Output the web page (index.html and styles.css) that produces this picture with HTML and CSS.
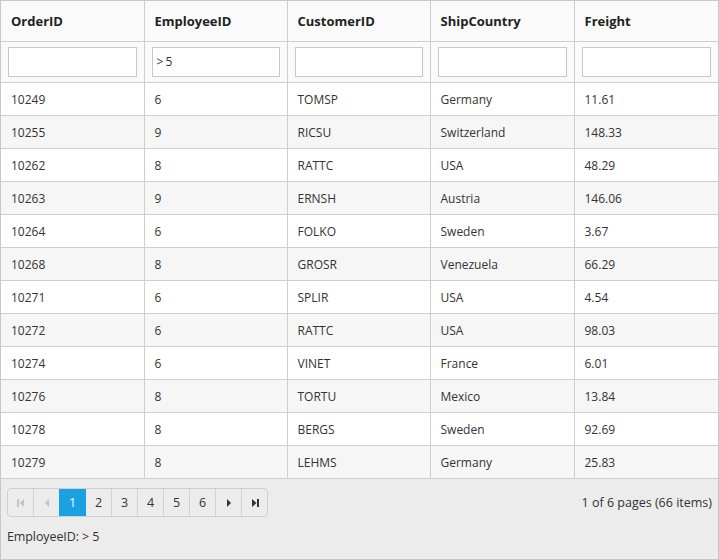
FILE: index.html
```html
<!DOCTYPE html>
<html>
<head>
<meta charset="utf-8">
<link rel="stylesheet" href="styles.css">
</head>
<body>
<div class="grid">
  <table class="table">
    <colgroup><col class="c1"><col class="c2"><col class="c3"><col class="c4"><col class="c5"></colgroup>
    <thead>
      <tr class="head"><th>OrderID</th><th>EmployeeID</th><th>CustomerID</th><th>ShipCountry</th><th>Freight</th></tr>
      <tr class="filter">
        <td><div class="inp"></div></td>
        <td><div class="inp">&gt; 5</div></td>
        <td><div class="inp"></div></td>
        <td><div class="inp"></div></td>
        <td><div class="inp"></div></td>
      </tr>
    </thead>
    <tbody>
      <tr><td>10249</td><td>6</td><td>TOMSP</td><td>Germany</td><td>11.61</td></tr>
      <tr class="alt"><td>10255</td><td>9</td><td>RICSU</td><td>Switzerland</td><td>148.33</td></tr>
      <tr><td>10262</td><td>8</td><td>RATTC</td><td>USA</td><td>48.29</td></tr>
      <tr class="alt"><td>10263</td><td>9</td><td>ERNSH</td><td>Austria</td><td>146.06</td></tr>
      <tr><td>10264</td><td>6</td><td>FOLKO</td><td>Sweden</td><td>3.67</td></tr>
      <tr class="alt"><td>10268</td><td>8</td><td>GROSR</td><td>Venezuela</td><td>66.29</td></tr>
      <tr><td>10271</td><td>6</td><td>SPLIR</td><td>USA</td><td>4.54</td></tr>
      <tr class="alt"><td>10272</td><td>6</td><td>RATTC</td><td>USA</td><td>98.03</td></tr>
      <tr><td>10274</td><td>6</td><td>VINET</td><td>France</td><td>6.01</td></tr>
      <tr class="alt"><td>10276</td><td>8</td><td>TORTU</td><td>Mexico</td><td>13.84</td></tr>
      <tr><td>10278</td><td>8</td><td>BERGS</td><td>Sweden</td><td>92.69</td></tr>
      <tr class="alt"><td>10279</td><td>8</td><td>LEHMS</td><td>Germany</td><td>25.83</td></tr>
    </tbody>
  </table>
  <div class="pager">
    <div class="pager-row">
      <div class="pages">
        <span class="pb dis"><svg width="8" height="8" viewBox="0 0 8 8"><rect x="0" y="0" width="2" height="8"/><path d="M7 0 L2.5 4 L7 8 Z"/></svg></span>
        <span class="pb dis"><svg width="8" height="8" viewBox="0 0 8 8"><path d="M6 0 L2 4 L6 8 Z"/></svg></span>
        <span class="pb active">1</span>
        <span class="pb">2</span>
        <span class="pb">3</span>
        <span class="pb">4</span>
        <span class="pb">5</span>
        <span class="pb">6</span>
        <span class="pb nav"><svg width="8" height="8" viewBox="0 0 8 8"><path d="M2 0 L6 4 L2 8 Z"/></svg></span>
        <span class="pb nav"><svg width="8" height="8" viewBox="0 0 8 8"><path d="M1 0 L5.5 4 L1 8 Z"/><rect x="6" y="0" width="2" height="8"/></svg></span>
      </div>
      <div class="info">1 of 6 pages (66 items)</div>
    </div>
    <div class="status">EmployeeID: &gt; 5</div>
  </div>
</div>
</body>
</html>
```

FILE: styles.css
```css
html, body {
  margin: 0;
  padding: 0;
  background: #fff;
}
body {
  font-family: "Open Sans", "Noto Sans", sans-serif;
  font-size: 12px;
  color: #333;
}
.grid {
  width: 717px;
  height: 558px;
  border: 1px solid #c8c8c8;
  display: flex;
  flex-direction: column;
}
.table {
  border-collapse: collapse;
  table-layout: fixed;
  width: 717px;
}
.c1 { width: 143px; }
.c2 { width: 143px; }
.c3 { width: 143px; }
.c4 { width: 144px; }
.c5 { width: 144px; }
th, td {
  border-left: 1px solid #cecece;
  border-bottom: 1px solid #cecece;
  padding: 0 10px;
  text-align: left;
  white-space: nowrap;
}
th:first-child, td:first-child { border-left: none; }
.head th {
  height: 40px;
  background: #fafafa;
  font-weight: bold;
  font-size: 13px;
  color: #222;
}
.filter td {
  height: 40px;
  background: #fafafa;
  padding: 0 7px;
}
.inp {
  border: 1px solid #c8c8c8;
  background: #fff;
  box-sizing: border-box;
  height: 30px;
  line-height: 28px;
  padding-left: 4px;
  font-size: 12px;
  color: #333;
  letter-spacing: -0.5px;
}
tbody td {
  height: 32px;
  color: #333;
}
tbody tr.alt td { background: #f6f6f6; }
.pager {
  flex: 1;
  background: #ececec;
  padding: 9px 6px 0 6px;
}
.pager-row {
  display: flex;
  justify-content: space-between;
  align-items: center;
}
.pages {
  display: flex;
  border: 1px solid #cfcfcf;
  border-radius: 4px;
  overflow: hidden;
  height: 27px;
}
.pb {
  width: 25px;
  border-left: 1px solid #d2d2d2;
  display: flex;
  align-items: center;
  justify-content: center;
  font-size: 12.5px;
  color: #333;
}
.pb:first-child { border-left: none; }
.pb svg { fill: #333; }
.pb.dis svg { fill: #c4c4c4; }
.pb.active {
  background: #1ba1e2;
  color: #fff;
  border-left-color: #1ba1e2;
}
.pb.active + .pb { border-left-color: #1ba1e2; }
.info {
  font-size: 12.5px;
  color: #333;
}
.status {
  margin-top: 11px;
  font-size: 12.5px;
  color: #333;
  letter-spacing: -0.1px;
}
```
